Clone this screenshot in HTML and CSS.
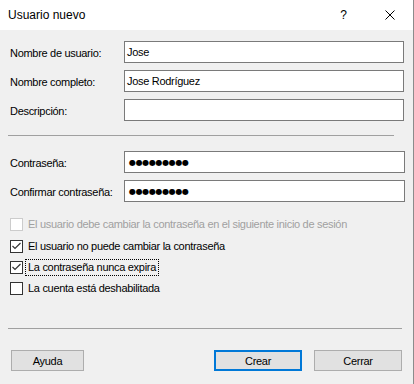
FILE: index.html
```html
<!DOCTYPE html>
<html lang="es">
<head>
<meta charset="utf-8">
<title>Usuario nuevo</title>
<link rel="stylesheet" href="styles.css">
</head>
<body>
<div class="window">
  <div class="titlebar">
    <span class="title">Usuario nuevo</span>
    <span class="help">?</span>
    <svg class="close" width="10" height="10" viewBox="0 0 10 10"><path d="M0.5 0.5 L9.5 9.5 M9.5 0.5 L0.5 9.5" stroke="#000" stroke-width="1" fill="none"/></svg>
  </div>
  <div class="content">
    <div class="fields">
      <label class="lbl">Nombre de usuario:</label>
      <div class="field">Jose</div>
      <label class="lbl">Nombre completo:</label>
      <div class="field">Jose Rodríguez</div>
      <label class="lbl">Descripción:</label>
      <div class="field"></div>
    </div>
    <div class="sep sep1"></div>
    <div class="fields pw">
      <label class="lbl">Contraseña:</label>
      <div class="field wide"><span class="dots">●●●●●●●●●</span></div>
      <label class="lbl">Confirmar contraseña:</label>
      <div class="field wide"><span class="dots">●●●●●●●●●</span></div>
    </div>
    <div class="checks">
      <div class="chk disabled"><span class="box"></span><span class="txt">El usuario debe cambiar la contraseña en el siguiente inicio de sesión</span></div>
      <div class="chk"><span class="box"><svg width="11" height="11" viewBox="0 0 11 11"><path d="M1.5 5 L4 7.5 L9.5 2" stroke="#333" stroke-width="1.2" fill="none"/></svg></span><span class="txt">El usuario no puede cambiar la contraseña</span></div>
      <div class="chk"><span class="box"><svg width="11" height="11" viewBox="0 0 11 11"><path d="M1.5 5 L4 7.5 L9.5 2" stroke="#333" stroke-width="1.2" fill="none"/></svg></span><span class="txt focus">La contraseña nunca expira</span></div>
      <div class="chk"><span class="box"></span><span class="txt">La cuenta está deshabilitada</span></div>
    </div>
    <div class="sep sep2"></div>
    <div class="buttons">
      <button class="btn small">Ayuda</button>
      <span class="spacer"></span>
      <button class="btn default">Crear</button>
      <button class="btn">Cerrar</button>
    </div>
  </div>
</div>
</body>
</html>
```
FILE: styles.css
```css
html, body {
  margin: 0;
  padding: 0;
  background: #f0f0f0;
}
.window {
  width: 413px;
  height: 384px;
  border-right: 1px solid #8c8c8c;
  background: #f0f0f0;
  font-family: "Liberation Sans", Arial, sans-serif;
  font-size: 11px;
  letter-spacing: -0.3px;
  color: #000;
  display: flex;
  flex-direction: column;
}
.titlebar {
  height: 30px;
  background: #fff;
  display: flex;
  align-items: center;
  padding-left: 8px;
  font-size: 12px;
  letter-spacing: 0;
}
.title {
  flex: 1;
  margin-top: -1px;
}
.help {
  font-size: 12px;
  margin-right: 38px;
}
.close {
  margin-right: 18px;
}
.content {
  flex: 1;
  padding-top: 11px;
}
.fields {
  display: grid;
  grid-template-columns: 114px 280px;
  grid-auto-rows: 22px;
  row-gap: 7px;
  padding-left: 10px;
  align-items: center;
}
.fields.pw {
  grid-template-columns: 114px 281px;
  margin-top: 15px;
}
.lbl {
  white-space: nowrap;
  padding-top: 1px;
}
.field {
  height: 22px;
  box-sizing: border-box;
  border: 1px solid #7a7a7a;
  background: #fff;
  padding-left: 2px;
  display: flex;
  align-items: center;
  font-size: 11px;
}
.dots {
  font-family: "DejaVu Sans", sans-serif;
  font-size: 8px;
  letter-spacing: -0.35px;
  padding-left: 2px;
}
.sep {
  height: 1px;
  background: #a0a0a0;
  margin-left: 8px;
}
.sep1 {
  width: 386px;
  margin-top: 14px;
}
.checks {
  margin-top: 16px;
  padding-left: 10px;
  display: grid;
  grid-template-rows: 22px 21px 21px 21px;
}
.chk {
  display: flex;
  align-items: flex-start;
}
.box {
  width: 13px;
  height: 13px;
  box-sizing: border-box;
  border: 1px solid #333;
  background: #fff;
  display: flex;
  align-items: center;
  justify-content: center;
}
.txt {
  margin-left: 4px;
  line-height: 13px;
  padding: 0 1px;
}
.disabled .box {
  border-color: #cccccc;
}
.disabled .txt {
  color: #a0a0a0;
}
.focus {
  outline: 1px dotted #000;
  outline-offset: 1px;
}
.sep2 {
  width: 394px;
  margin-top: 25px;
}
.buttons {
  display: flex;
  margin-top: 21px;
  padding-left: 11px;
  gap: 12px;
}
.spacer {
  flex: 1;
}
.btn {
  font-family: "Liberation Sans", Arial, sans-serif;
  font-size: 11px;
  letter-spacing: -0.3px;
  color: #000;
  width: 88px;
  height: 21px;
  background: #e1e1e1;
  border: 1px solid #adadad;
  padding: 0;
  margin: 0;
}
.btn.small {
  width: 73px;
}
.btn.default {
  border: 2px solid #0078d7;
}
.buttons .btn:last-child {
  margin-right: 11px;
}
```
